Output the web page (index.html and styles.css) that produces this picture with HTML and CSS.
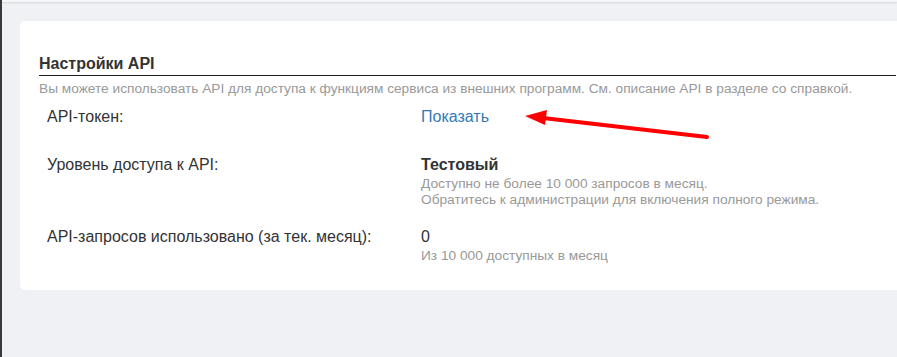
FILE: index.html
```html
<!DOCTYPE html>
<html lang="ru">
<head>
    <meta charset="UTF-8">
    <title>Настройки API</title>
    <link rel="stylesheet" href="styles.css">
</head>
<body>
    <div class="topbar"></div>

    <div class="card">
        <div class="section">
            <h2 class="section-title">Настройки API</h2>
            <p class="section-desc">Вы можете использовать API для доступа к функциям сервиса из внешних программ. См. описание API в разделе со справкой.</p>

            <div class="settings">
                <div class="row row-token">
                    <div class="label">API-токен:</div>
                    <div class="value">
                        <a href="#" class="link">Показать</a>
                        <svg class="arrow" width="200" height="32" viewBox="0 0 200 32">
                            <line x1="186" y1="27" x2="22" y2="8" stroke="#f00" stroke-width="4" stroke-linecap="round"/>
                            <polygon points="4,6 26,0 24,15" fill="#f00"/>
                        </svg>
                    </div>
                </div>

                <div class="row row-level">
                    <div class="label">Уровень доступа к API:</div>
                    <div class="value">
                        <div class="value-strong">Тестовый</div>
                        <div class="hint">Доступно не более 10 000 запросов в месяц.<br>Обратитесь к администрации для включения полного режима.</div>
                    </div>
                </div>

                <div class="row row-used">
                    <div class="label">API-запросов использовано (за тек. месяц):</div>
                    <div class="value">
                        <div class="value-plain">0</div>
                        <div class="hint">Из 10 000 доступных в месяц</div>
                    </div>
                </div>
            </div>
        </div>
    </div>
</body>
</html>
```

FILE: styles.css
```css
* {
    margin: 0;
    padding: 0;
    box-sizing: border-box;
}

body {
    font-family: 'Liberation Sans', Arial, sans-serif;
    background: #f0f1f5;
    border-left: 2px solid #3a3a3a;
    min-height: 100vh;
    overflow: hidden;
    color: #333;
}

.topbar {
    height: 2px;
    background: #f6f6f8;
    box-shadow: 0 1px 2px rgba(0,0,0,0.12);
}

.card {
    background: #fff;
    margin: 19px -40px 0 18px;
    border-radius: 5px;
    height: 269px;
    padding: 33px 0 0 19px;
}

.section {
    width: 857px;
}

.section-title {
    font-size: 16px;
    font-weight: bold;
    color: #333;
    line-height: 20px;
    padding-bottom: 1px;
    border-bottom: 1px solid #222;
}

.section-desc {
    font-size: 13.7px;
    color: #999;
    line-height: 16px;
    margin-top: 5px;
}

.settings {
    padding-left: 8px;
}

.row {
    display: grid;
    grid-template-columns: 374px 1fr;
    font-size: 16px;
    line-height: 20px;
}

.row-token {
    padding-top: 10px;
}

.row-level {
    padding-top: 28px;
}

.row-used {
    padding-top: 19px;
}

.label {
    color: #333;
}

.value {
    position: relative;
}

.link {
    color: #337ab7;
    text-decoration: none;
}

.arrow {
    position: absolute;
    left: 100px;
    top: 3px;
}

.value-strong {
    font-weight: bold;
    color: #333;
}

.value-plain {
    color: #333;
}

.hint {
    font-size: 13.7px;
    line-height: 16px;
    margin-top: 1px;
    color: #999;
}
```
